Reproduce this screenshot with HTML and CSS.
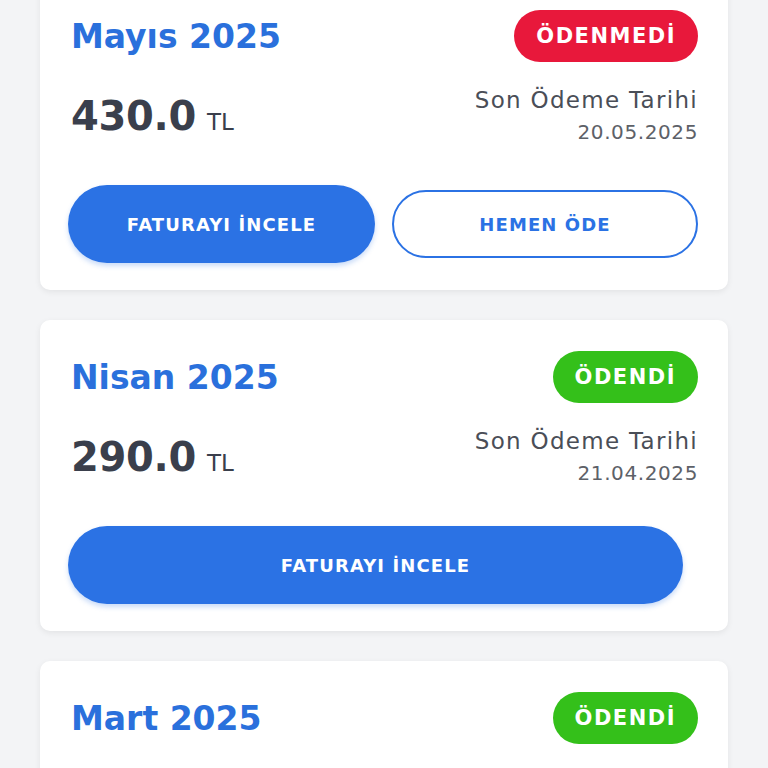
FILE: index.html
```html
<!doctype html>
<html lang="tr">
<head>
  <meta charset="utf-8">
  <meta name="viewport" content="width=device-width, initial-scale=1">
  <title>Faturalarım</title>
  <link rel="stylesheet" href="styles.css">
</head>
<body>
<div class="bill-list">

  <div class="bill-card">
    <div class="bill-head">
      <div class="bill-month">Mayıs 2025</div>
      <div class="badge unpaid">ÖDENMEDİ</div>
    </div>
    <div class="bill-info">
      <div class="bill-amount">430.0<span class="currency">TL</span></div>
      <div class="bill-due">
        <div class="due-label">Son Ödeme Tarihi</div>
        <div class="due-date">20.05.2025</div>
      </div>
    </div>
    <div class="bill-actions">
      <button class="btn btn-fill">FATURAYI İNCELE</button>
      <button class="btn btn-outline">HEMEN ÖDE</button>
    </div>
  </div>

  <div class="bill-card">
    <div class="bill-head">
      <div class="bill-month">Nisan 2025</div>
      <div class="badge paid">ÖDENDİ</div>
    </div>
    <div class="bill-info">
      <div class="bill-amount">290.0<span class="currency">TL</span></div>
      <div class="bill-due">
        <div class="due-label">Son Ödeme Tarihi</div>
        <div class="due-date">21.04.2025</div>
      </div>
    </div>
    <div class="bill-actions">
      <button class="btn btn-fill btn-wide">FATURAYI İNCELE</button>
    </div>
  </div>

  <div class="bill-card">
    <div class="bill-head">
      <div class="bill-month">Mart 2025</div>
      <div class="badge paid">ÖDENDİ</div>
    </div>
  </div>

</div>
</body>
</html>
```

FILE: styles.css
```css
body {
  margin: 0;
  background-color: #f3f4f6;
  font-family: "DejaVu Sans", "Noto Sans", sans-serif;
  overflow: hidden;
}

.bill-list {
  margin-top: -21px;
}

.bill-card {
  background-color: #fff;
  border-radius: 10px;
  box-shadow: 0 2px 6px rgba(0, 0, 0, 0.07);
  margin: 0 40px 30px 40px;
  padding: 31px 30px 26px 31px;
  height: 311px;
  box-sizing: border-box;
}

.bill-head {
  display: flex;
  justify-content: space-between;
  align-items: center;
  height: 52px;
}

.bill-month {
  color: #2a70dc;
  font-size: 33px;
  font-weight: bold;
}

.badge {
  height: 52px;
  line-height: 52px;
  padding: 0 22px;
  border-radius: 26px;
  color: #fff;
  font-size: 21px;
  font-weight: bold;
  letter-spacing: 1.5px;
}

.badge.unpaid {
  background-color: #e8183b;
}

.badge.paid {
  background-color: #34c01a;
}

.bill-info {
  display: flex;
  justify-content: space-between;
  align-items: center;
  margin-top: 22px;
}

.bill-amount {
  color: #3a3f4c;
  font-size: 40px;
  font-weight: bold;
  letter-spacing: -0.3px;
}

.currency {
  font-size: 23px;
  font-weight: normal;
  letter-spacing: 0;
  margin-left: 11px;
}

.bill-due {
  text-align: right;
}

.due-label {
  color: #4a4e57;
  font-size: 23px;
  line-height: 32px;
  letter-spacing: 1.3px;
}

.due-date {
  color: #5d6168;
  font-size: 20px;
  line-height: 32px;
  letter-spacing: 0.6px;
}

.bill-actions {
  display: flex;
  align-items: center;
  gap: 17px;
  margin: 37px 0 0 -3px;
}

.btn {
  font-family: inherit;
  font-size: 18px;
  font-weight: bold;
  letter-spacing: 1.1px;
  border-radius: 40px;
  cursor: pointer;
}

.btn-fill {
  width: 307px;
  height: 78px;
  border: none;
  background-color: #2b72e4;
  color: #fff;
  box-shadow: 0 3px 5px rgba(43, 114, 228, 0.25);
}

.btn-wide {
  width: 615px;
}

.btn-outline {
  width: 306px;
  height: 68px;
  border: 2px solid #2b72e4;
  background-color: #fff;
  color: #2b72e4;
}
```
